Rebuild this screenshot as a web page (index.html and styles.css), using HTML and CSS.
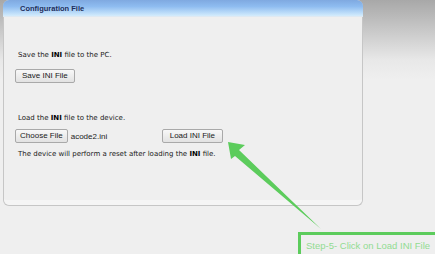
FILE: index.html
```html
<!DOCTYPE html>
<html lang="en">
<head>
    <meta charset="UTF-8">
    <title>Configuration File</title>
    <link rel="stylesheet" href="styles.css">
</head>
<body>
    <div class="panel">
        <div class="panel-header">Configuration File</div>
        <div class="panel-body">
            <p class="line save-line">Save the <b>INI</b> file to the PC.</p>
            <button class="btn save-btn">Save INI File</button>

            <p class="line load-line">Load the <b>INI</b> file to the device.</p>
            <div class="load-row">
                <button class="btn">Choose File</button>
                <span class="file-name">acode2.ini</span>
                <button class="btn load-btn">Load INI File</button>
            </div>
            <p class="line">The device will perform a reset after loading the <b>INI</b> file.</p>
        </div>
    </div>

    <svg class="arrow" width="435" height="254" viewBox="0 0 435 254">
        <path d="M228 142 L245 145 L239 150 L321 229 L235 156 L231 159 Z" fill="#5ccc5c"/>
    </svg>

    <div class="callout">Step-5- Click on Load INI File</div>
</body>
</html>
```

FILE: styles.css
```css
* {
    margin: 0;
    padding: 0;
    box-sizing: border-box;
}

body {
    width: 435px;
    height: 254px;
    overflow: hidden;
    background: linear-gradient(180deg, #a8a8a8 0px, #e8e8e8 60px, #efefef 80px);
    font-family: "DejaVu Sans", Verdana, sans-serif;
    position: relative;
}

.panel {
    margin-left: 3px;
    width: 360px;
    height: 206px;
    background: #efefef;
    border: 1px solid #c6c6c6;
    border-top: none;
    border-radius: 6px;
    display: flex;
    flex-direction: column;
}

.panel-header {
    height: 17px;
    border-radius: 6px 6px 0 0;
    background: linear-gradient(180deg, #7fa9e0 0%, #8ebcf0 40%, #b6d8f8 75%, #d4ecfc 100%);
    border-bottom: 1px solid #dfe9f2;
    color: #1d2d5a;
    font-family: "Liberation Sans", Tahoma, sans-serif;
    font-size: 7.5px;
    font-weight: bold;
    padding: 4px 0 0 17px;
    margin: 0 -1px;
}

.panel-body {
    flex: 1;
    padding: 34px 0 0 11px;
    border-bottom: 5px solid #f5f5f5;
    border-radius: 0 0 6px 6px;
}

.line {
    font-size: 7px;
    color: #1a1a1a;
    padding-left: 3px;
    height: 11px;
}

.line b {
    font-weight: bold;
    color: #000;
}

.save-line {
    margin-bottom: 1px;
}

.load-line {
    margin-top: 31px;
    margin-bottom: 4px;
}

.btn {
    font-family: "Liberation Sans", Arial, sans-serif;
    font-size: 8px;
    color: #1a1a1a;
    background: linear-gradient(180deg, #f8f8f8, #e2e2e2);
    border: 1px solid #a9a9a9;
    border-radius: 2px;
    height: 14px;
    padding: 0 4px;
    line-height: 12px;
}

.save-btn {
    padding: 0 6px;
}

.load-row {
    display: flex;
    align-items: center;
    margin-bottom: 7px;
}

.file-name {
    font-family: "Liberation Sans", Arial, sans-serif;
    font-size: 8px;
    color: #222;
    margin-left: 3px;
    width: 91px;
}

.load-btn {
    padding: 0 7px;
}

.arrow {
    position: absolute;
    left: 0;
    top: 0;
}

.callout {
    position: absolute;
    left: 298px;
    top: 232px;
    width: 150px;
    height: 30px;
    border: 3px solid #5ccc5c;
    color: #92dc92;
    font-family: "Liberation Sans", Arial, sans-serif;
    font-size: 9.5px;
    padding: 5px 0 0 5px;
}
```
